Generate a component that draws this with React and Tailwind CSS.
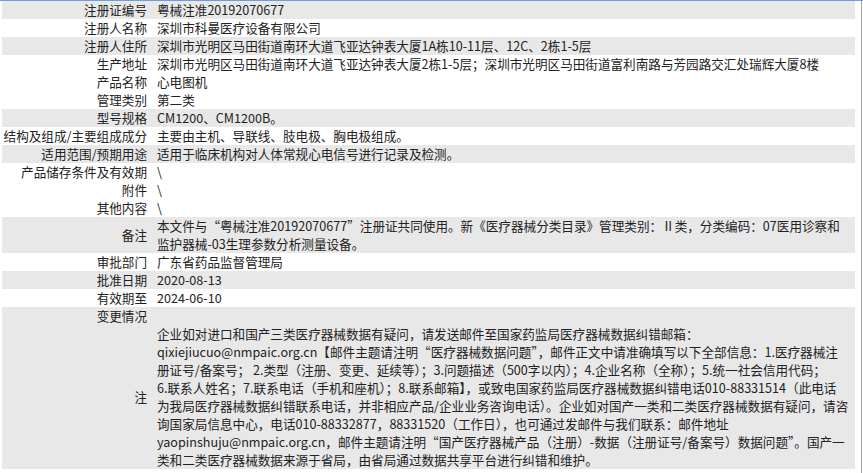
import React from 'react';

const rows = [
  { label: '注册证编号', value: ['粤械注准20192070677'], gray: true },
  { label: '注册人名称', value: ['深圳市科曼医疗设备有限公司'] },
  { label: '注册人住所', value: ['深圳市光明区马田街道南环大道飞亚达钟表大厦1A栋10-11层、12C、2栋1-5层'], gray: true },
  {
    label: '生产地址',
    value: ['深圳市光明区马田街道南环大道飞亚达钟表大厦2栋1-5层；深圳市光明区马田街道富利南路与芳园路交汇处瑞辉大厦8楼'],
  },
  { label: '产品名称', value: ['心电图机'] },
  { label: '管理类别', value: ['第二类'] },
  { label: '型号规格', value: ['CM1200、CM1200B。'], gray: true },
  { label: '结构及组成/主要组成成分', value: ['主要由主机、导联线、肢电极、胸电极组成。'] },
  { label: '适用范围/预期用途', value: ['适用于临床机构对人体常规心电信号进行记录及检测。'], gray: true },
  { label: '产品储存条件及有效期', value: ['\\'] },
  { label: '附件', value: ['\\'] },
  { label: '其他内容', value: ['\\'] },
  {
    label: '备注',
    value: [
      '本文件与“粤械注准20192070677”注册证共同使用。新《医疗器械分类目录》管理类别：Ⅱ类，分类编码：07医用诊察和',
      '监护器械-03生理参数分析测量设备。',
    ],
    gray: true,
  },
  { label: '审批部门', value: ['广东省药品监督管理局'] },
  { label: '批准日期', value: ['2020-08-13'], gray: true },
  { label: '有效期至', value: ['2024-06-10'] },
  { label: '变更情况', value: [''], gray: true },
  {
    label: '注',
    value: [
      '企业如对进口和国产三类医疗器械数据有疑问，请发送邮件至国家药监局医疗器械数据纠错邮箱：',
      'qixiejiucuo@nmpaic.org.cn【邮件主题请注明“医疗器械数据问题”，邮件正文中请准确填写以下全部信息：1.医疗器械注',
      '册证号/备案号； 2.类型（注册、变更、延续等）；3.问题描述（500字以内）；4.企业名称（全称）；5.统一社会信用代码；',
      '6.联系人姓名；7.联系电话（手机和座机）；8.联系邮箱】，或致电国家药监局医疗器械数据纠错电话010-88331514（此电话',
      '为我局医疗器械数据纠错联系电话，并非相应产品/企业业务咨询电话）。企业如对国产一类和二类医疗器械数据有疑问，请咨',
      '询国家局信息中心，电话010-88332877，88331520（工作日），也可通过发邮件与我们联系：邮件地址',
      'yaopinshuju@nmpaic.org.cn，邮件主题请注明“国产医疗器械产品（注册）-数据（注册证号/备案号）数据问题”。国产一',
      '类和二类医疗器械数据来源于省局，由省局通过数据共享平台进行纠错和维护。',
    ],
    gray: true,
  },
];

const Row = ({ label, value, gray }) => (
  <div className={`flex ${gray ? 'bg-[#e8e8e8]' : 'bg-white'}`}>
    <div className="w-[150px] shrink-0 flex items-center justify-end pr-[5px] whitespace-nowrap">{label}</div>
    <div className="flex-1 pl-[5px] min-h-[18px] overflow-hidden">
      {value.map((line, i) => (
        <div key={i} className="whitespace-nowrap h-[18px]">
          {line}
        </div>
      ))}
    </div>
  </div>
);

export default function App() {
  return (
    <div className="w-[863px] h-[473px] bg-white border-t border-[#6c9fd6] overflow-hidden flex">
      <div className="w-[861px] shrink-0">
        <div
          className="ml-[2px] w-[853px] text-[12.6px] leading-[18px] text-[#222]"
          style={{ fontFamily: '"Microsoft YaHei", "Noto Sans CJK SC", sans-serif' }}
        >
          {rows.map((r) => (
            <Row key={r.label} {...r} />
          ))}
        </div>
      </div>
      <div className="w-px shrink-0 bg-[#a6a6a6]" />
    </div>
  );
}
